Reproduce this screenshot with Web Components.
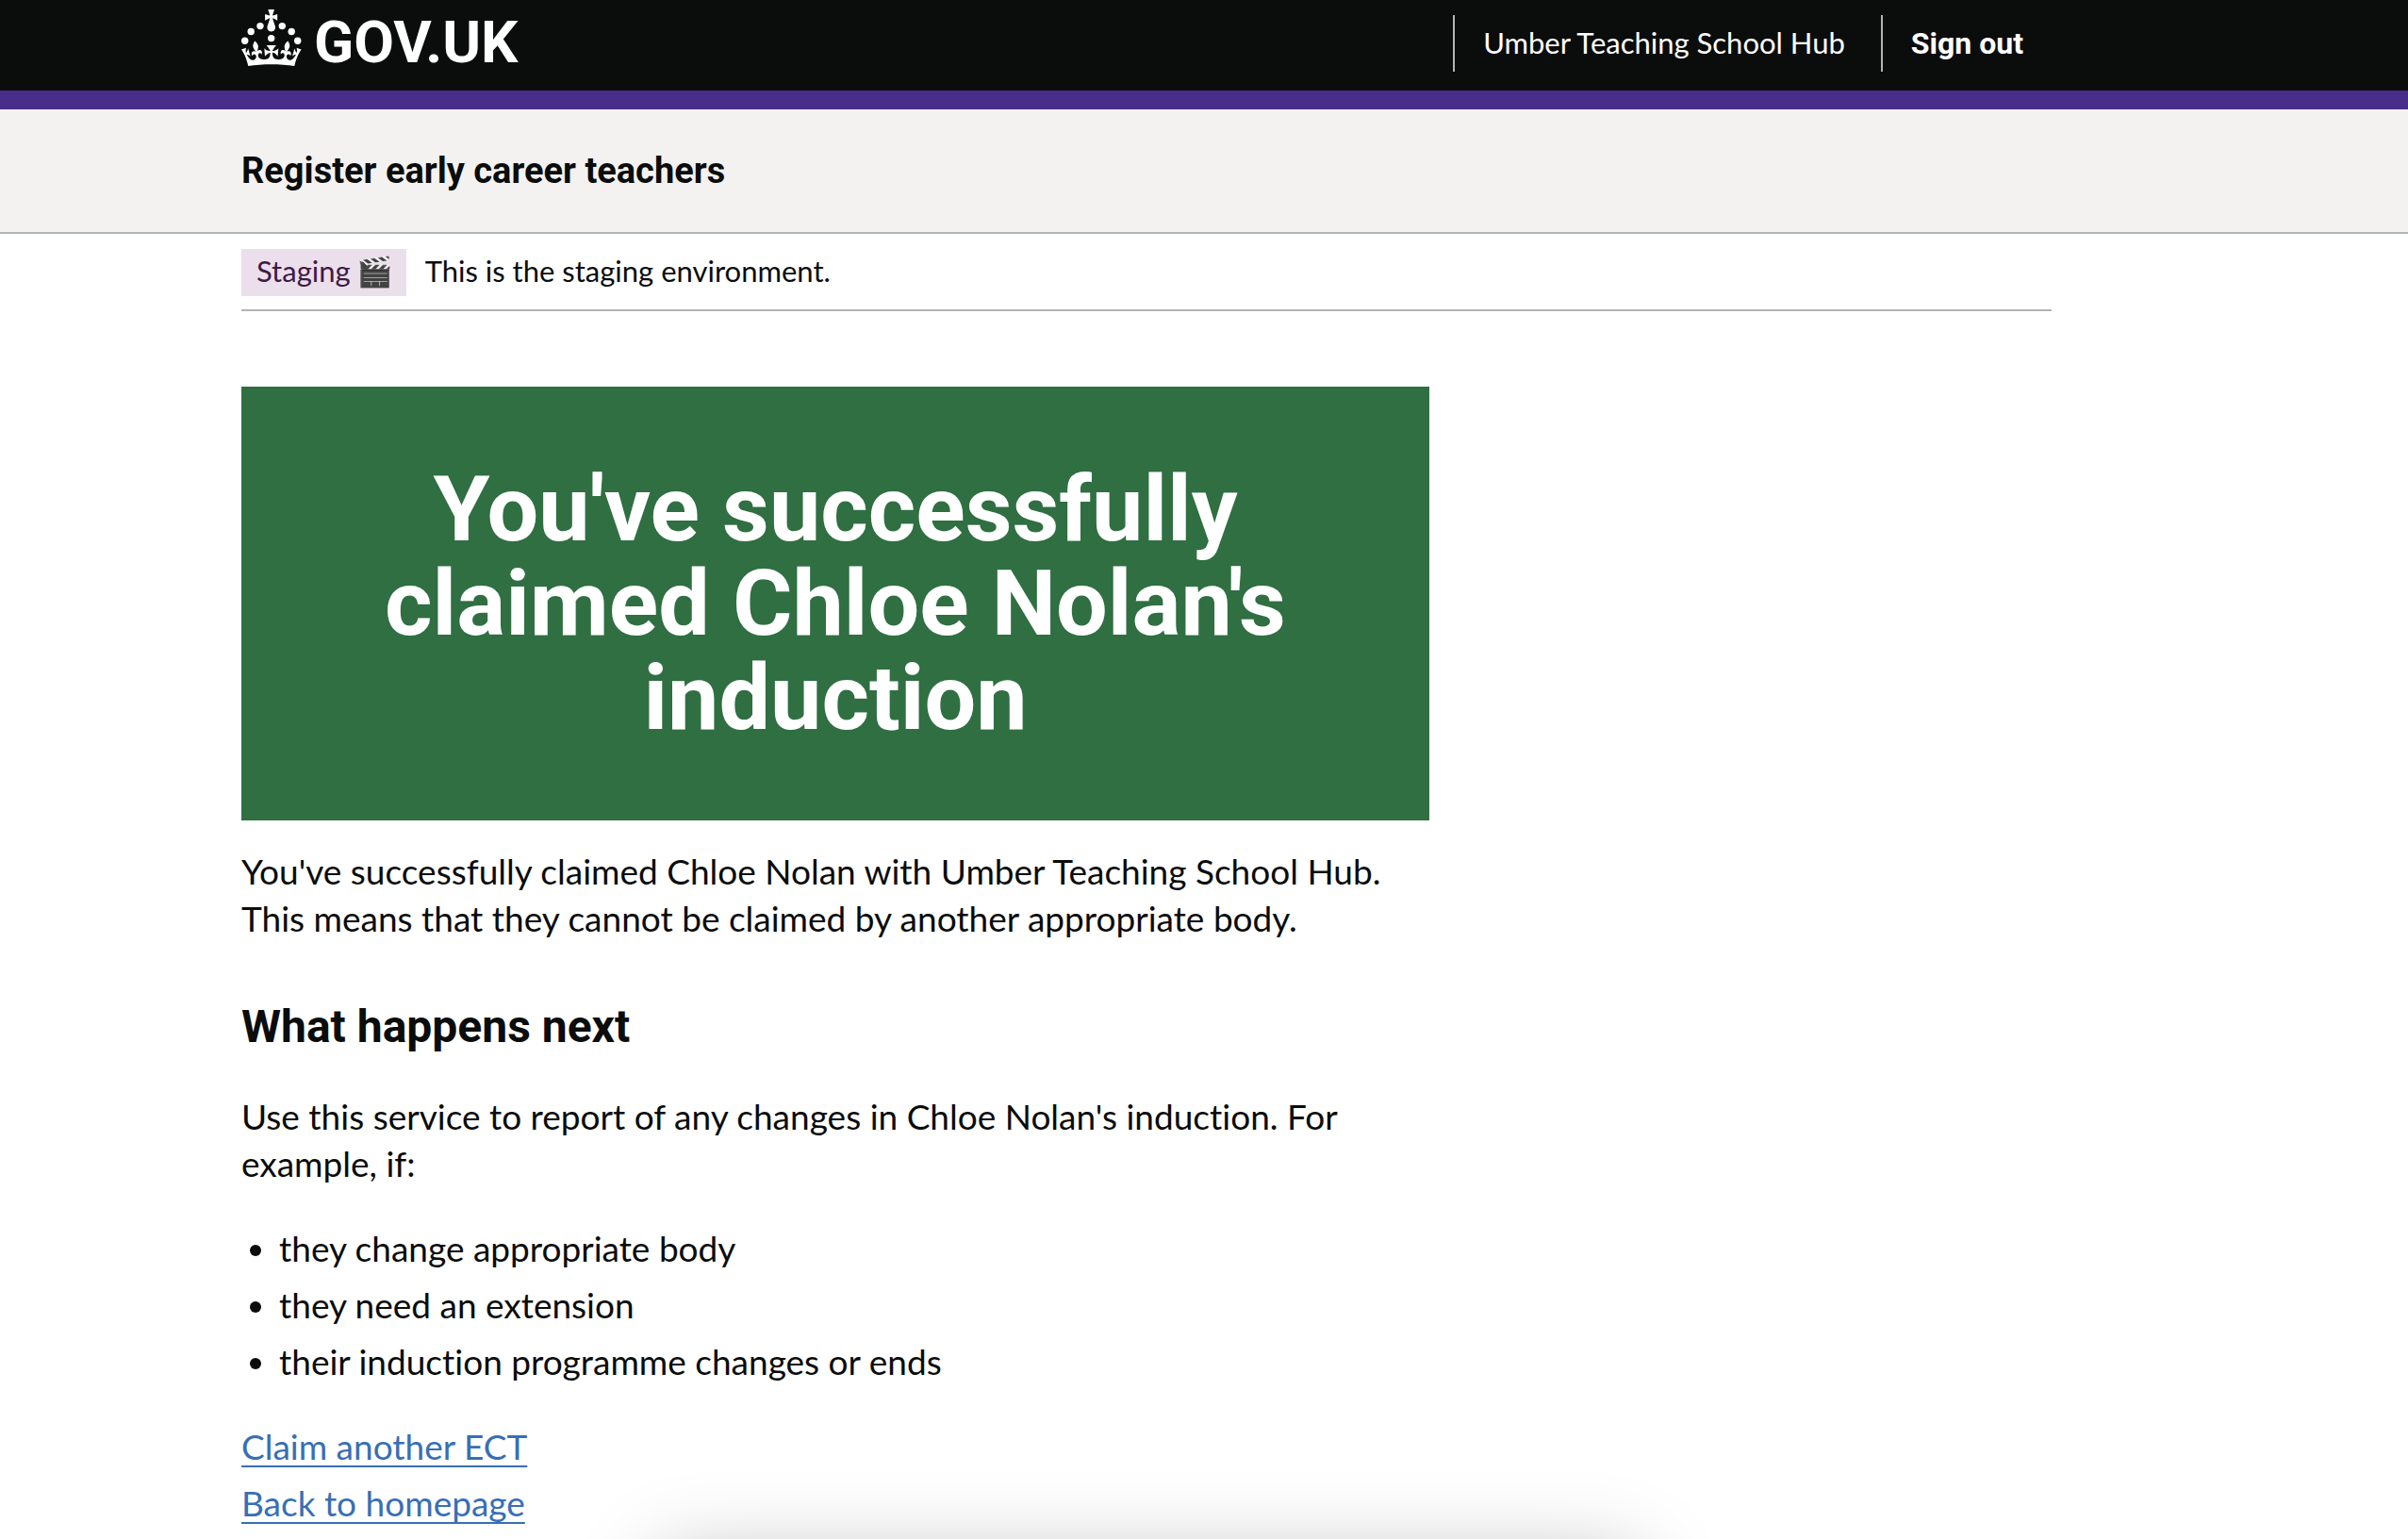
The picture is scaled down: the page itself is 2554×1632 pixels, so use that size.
<!DOCTYPE html>
<html lang="en">
<head>
<meta charset="utf-8">
<title>You've successfully claimed Chloe Nolan's induction - Register early career teachers</title>
<style>
  :root {
    --text: #0b0c0c;
    --brand: #482d8a;
    --surface: #f3f2f1;
    --border: #b1b4b6;
    --success: #2f6f42;
    --link: #386fb5;
    --tag-bg: #ebdfeb;
    --tag-text: #3f1a44;
    --strong-font: Roboto, Lato, sans-serif;
  }
  body {
    margin: 0;
    background: #fff;
    color: var(--text);
    font: 37px/50px Lato, Roboto, sans-serif;
    font-variant-ligatures: no-common-ligatures;
  }
</style>
</head>
<body>
<site-header>
  <header-item>Umber Teaching School Hub</header-item>
  <header-item strong href="#sign-out">Sign out</header-item>
</site-header>
<service-navigation>Register early career teachers</service-navigation>
<page-width>
  <phase-banner><span slot="tag">Staging</span>This is the staging environment.</phase-banner>
  <page-main>
    <confirmation-panel>You've successfully claimed Chloe Nolan's induction</confirmation-panel>
    <body-text>You've successfully claimed Chloe Nolan with Umber Teaching School Hub. This means that they cannot be claimed by another appropriate body.</body-text>
    <section-heading>What happens next</section-heading>
    <body-text>Use this service to report of any changes in Chloe Nolan's induction. For example, if:</body-text>
    <bullet-list items="they change appropriate body|they need an extension|their induction programme changes or ends"></bullet-list>
    <link-list>
      <text-link href="#claim">Claim another ECT</text-link>
      <text-link href="#home">Back to homepage</text-link>
    </link-list>
  </page-main>
</page-width>
<window-shadow></window-shadow>

<script>
const define = (name, html, setup) => {
  const template = document.createElement('template');
  template.innerHTML = html;
  customElements.define(name, class extends HTMLElement {
    connectedCallback() {
      if (this.shadowRoot) return;
      const root = this.attachShadow({ mode: 'open' });
      root.append(template.content.cloneNode(true));
      if (setup) setup(this, root);
    }
  });
};

define('page-width', `
  <style>
    :host { display: block; max-width: 1920px; margin: 0 60px 0 256px; }
  </style>
  <slot></slot>`);

define('crown-logo', `
  <style>
    :host { display: block; }
    a { display: flex; align-items: flex-start; gap: 13px; color: #fff; text-decoration: none; }
    svg { display: block; width: 64px; height: 60px; fill: currentColor; }
    span { font: 700 62px/70px var(--strong-font); }
  </style>
  <a href="#top">
    <svg viewBox="0 0 64 60" aria-hidden="true">
      <circle cx="20" cy="17.6" r="3.7"/><circle cx="10.2" cy="23.5" r="3.7"/>
      <circle cx="3.7" cy="33.2" r="3.7"/><circle cx="31.7" cy="30.6" r="3.7"/>
      <circle cx="43.3" cy="17.6" r="3.7"/><circle cx="53.2" cy="23.5" r="3.7"/>
      <circle cx="59.7" cy="33.2" r="3.7"/>
      <path d="M33.1,9.8c.2-.1.3-.3.5-.5l4.6,2.4v-6.8l-4.6,1.5c-.1-.2-.3-.3-.5-.5l1.9-5.9h-6.7l1.9,5.9c-.2.1-.3.3-.5.5l-4.6-1.5v6.8l4.6-2.4c.1.2.3.3.5.5l-2.6,8c-.9,2.8,1.2,5.7,4.1,5.7h0c3,0,5.1-2.9,4.1-5.7l-2.6-8ZM37,37.9s-3.4,3.8-4.1,6.1c2.2,0,4.2-.5,6.4-2.8l-.7,8.5c-2-2.8-4.4-4.1-5.7-3.8.1,3.1.5,6.7,5.8,7.2,3.7.3,6.7-1.5,7-3.8.4-2.6-2-4.3-3.7-1.6-1.4-4.5,2.4-6.1,4.9-3.2-1.9-4.5-1.8-7.7,2.4-10.9,3,4,2.6,7.3-1.2,11.1,2.4-1.3,6.2,0,4,4.6-1.2-2.8-3.7-2.2-4.2.2-.3,1.7.7,3.7,3,4.2,1.9.3,4.7-.9,7-5.9-1.3,0-2.4.7-3.9,1.7l2.4-8c.6,2.3,1.4,3.7,2.2,4.5.6-1.6.5-2.8,0-5.3l5,1.8c-2.6,3.6-5.2,8.7-7.3,17.5-7.4-1.1-15.7-1.7-24.5-1.7h0c-8.8,0-17.1.6-24.5,1.7-2.1-8.9-4.7-13.9-7.3-17.5l5-1.8c-.5,2.5-.6,3.7,0,5.3.8-.8,1.6-2.3,2.2-4.5l2.4,8c-1.5-1-2.6-1.7-3.9-1.7,2.3,5,5.2,6.2,7,5.9,2.3-.4,3.3-2.4,3-4.2-.5-2.4-3-3.1-4.2-.2-2.2-4.6,1.6-6,4-4.6-3.7-3.7-4.2-7.1-1.2-11.1,4.2,3.2,4.3,6.4,2.4,10.9,2.5-2.8,6.3-1.3,4.9,3.2-1.8-2.7-4.1-1-3.7,1.6.3,2.3,3.3,4.1,7,3.8,5.4-.5,5.7-4.2,5.8-7.2-1.3-.2-3.7,1-5.7,3.8l-.7-8.5c2.2,2.3,4.2,2.7,6.4,2.8-.7-2.3-4.1-6.1-4.1-6.1h10.6,0Z"/>
    </svg>
    <span>GOV.UK</span>
  </a>`);

define('header-item', `
  <style>
    :host { display: block; padding: 10px 38px 12px 30px; border-left: 2px solid var(--border); font-size: 31px; line-height: 38px; color: #fff; }
    :host([strong]) { padding-right: 30px; font: 700 32px/40px var(--strong-font); padding-bottom: 10px; }
    a { color: inherit; text-decoration: none; }
  </style>
  <slot></slot>`, (host, root) => {
    if (!host.hasAttribute('href')) return;
    const a = document.createElement('a');
    a.href = host.getAttribute('href');
    const slot = root.querySelector('slot');
    slot.replaceWith(a);
    a.append(slot);
  });

define('site-header', `
  <style>
    :host { display: block; background: var(--text); border-bottom: 20px solid var(--brand); }
    header { display: flex; justify-content: space-between; height: 96px; }
    crown-logo { padding-top: 10px; }
    nav { display: flex; align-items: flex-start; padding-top: 16px; }
  </style>
  <page-width><header>
    <crown-logo></crown-logo>
    <nav aria-label="Account"><slot></slot></nav>
  </header></page-width>`);

define('service-navigation', `
  <style>
    :host { display: block; background: var(--surface); border-bottom: 2px solid var(--border); }
    a { display: block; width: max-content; padding: 40px 0; color: var(--text); text-decoration: none; font: 700 38px/50px var(--strong-font); }
  </style>
  <page-width><a href="#service"><slot></slot></a></page-width>`);

define('phase-banner', `
  <style>
    :host { display: flex; gap: 20px; padding: 16px 0 14px; border-bottom: 2px solid var(--border); font-size: 31px; line-height: 38px; }
    strong, p { margin: 0; padding: 4px 0 8px; font-weight: 400; }
    strong { display: flex; gap: 6px; padding-left: 16px; padding-right: 14px; background: var(--tag-bg); color: var(--tag-text); }
  </style>
  <strong><slot name="tag"></slot><span>🎬</span></strong>
  <p><slot></slot></p>`);

define('page-main', `
  <style>
    :host { display: block; padding: 80px 0 0; }
    main { max-width: 1260px; }
  </style>
  <main><slot></slot></main>`);

define('confirmation-panel', `
  <style>
    :host { display: block; margin-bottom: 29px; padding: 80px; background: var(--success); color: #fff; text-align: center; }
    h1 { margin: 0; font: 700 97px/100px var(--strong-font); }
  </style>
  <h1><slot></slot></h1>`);

define('body-text', `
  <style>
    :host { display: block; margin-bottom: 40px; }
    p { margin: 0; }
  </style>
  <p><slot></slot></p>`);

define('section-heading', `
  <style>
    :host { display: block; margin: 60px 0 40px; }
    h2 { margin: 0; font: 700 48px/60px var(--strong-font); }
  </style>
  <h2><slot></slot></h2>`);

define('bullet-list', `
  <style>
    :host { display: block; margin-bottom: 40px; }
    ul { display: flex; flex-direction: column; gap: 10px; margin: 0; padding-left: 40px; }
  </style>
  <ul></ul>`, (host, root) => {
    root.querySelector('ul').append(...host.getAttribute('items').split('|').map(text => {
      const li = document.createElement('li');
      li.textContent = text;
      return li;
    }));
  });

define('link-list', `
  <style>
    :host { display: flex; flex-direction: column; align-items: flex-start; gap: 10px; }
  </style>
  <slot></slot>`);

define('text-link', `
  <style>
    :host { display: block; }
    a { color: var(--link); text-decoration: underline 2px; text-underline-offset: 6px; text-decoration-skip-ink: none; }
  </style>
  <a><slot></slot></a>`, (host, root) => {
    root.querySelector('a').href = host.getAttribute('href');
  });

/* Soft shadow rising from the bottom edge of the window */
define('window-shadow', `
  <style>
    :host { position: fixed; inset: auto 0 0 0; height: 120px; overflow: hidden; pointer-events: none; }
    div { margin: 140px 818px 0 700px; height: 200px; box-shadow: 0 0 88px rgba(0, 0, 0, .26); }
  </style>
  <div></div>`);
</script>
</body>
</html>
